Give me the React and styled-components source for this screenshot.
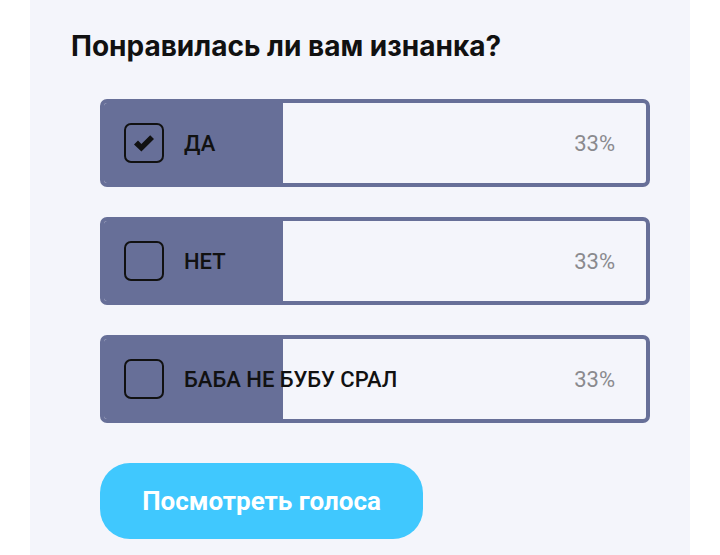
import React, { useState } from "react";
import styled, { createGlobalStyle } from "styled-components";

const GlobalStyle = createGlobalStyle`
  body {
    margin: 0;
    background: #ffffff;
    font-family: Roboto, "Liberation Sans", sans-serif;
  }
`;

const Panel = styled.div`
  margin: 0 30px;
  min-height: 555px;
  background: #f4f5fb;
  padding: 29px 0 0 41px;
  box-sizing: border-box;
`;

const Title = styled.h2`
  margin: 0;
  font-family: Inter, Roboto, sans-serif;
  font-size: 28px;
  line-height: 34px;
  font-weight: 700;
  color: #111111;
`;

const OptionList = styled.div`
  display: flex;
  flex-direction: column;
  gap: 30px;
  width: 550px;
  margin: 36px 0 0 29px;
`;

const Option = styled.div`
  position: relative;
  height: 88px;
  box-sizing: border-box;
  border: 4px solid #676f98;
  border-radius: 7px;
  overflow: hidden;
  display: flex;
  align-items: center;
  padding: 0 31px 0 20px;
  cursor: pointer;
`;

const Fill = styled.div`
  position: absolute;
  left: 0;
  top: 0;
  bottom: 0;
  background: #676f98;
`;

const Checkbox = styled.div`
  position: relative;
  width: 40px;
  height: 40px;
  box-sizing: border-box;
  border: 2px solid #111111;
  border-radius: 7px;
  display: flex;
  align-items: center;
  justify-content: center;
  flex-shrink: 0;
`;

const Label = styled.span`
  position: relative;
  margin-left: 20px;
  font-size: 22px;
  font-weight: 500;
  color: #111111;
  text-transform: uppercase;
`;

const Percent = styled.span`
  position: relative;
  margin-left: auto;
  font-size: 22px;
  color: #8a8a8e;
`;

const Button = styled.button`
  margin: 40px 0 0 29px;
  width: 323px;
  height: 76px;
  border: none;
  border-radius: 30px;
  background: #40c8fe;
  color: #ffffff;
  font-family: Roboto, "Liberation Sans", sans-serif;
  font-size: 26px;
  font-weight: 700;
  cursor: pointer;
`;

const CheckIcon = () => (
  <svg width="24" height="24" viewBox="0 0 24 24">
    <path
      d="M2 13.4 L6 9.6 L9.4 13 L18.2 4.2 L22 8 L9.4 20.6 Z"
      fill="#111111"
    />
  </svg>
);

const options = [
  { id: 1, text: "Да", percent: 33 },
  { id: 2, text: "Нет", percent: 33 },
  { id: 3, text: "Баба не бубу срал", percent: 33 },
];

export default function App() {
  const [selected, setSelected] = useState(1);

  return (
    <>
      <GlobalStyle />
      <Panel>
        <Title>Понравилась ли вам изнанка?</Title>
        <OptionList>
          {options.map((opt) => (
            <Option key={opt.id} onClick={() => setSelected(opt.id)}>
              <Fill style={{ width: opt.percent + "%" }} />
              <Checkbox>{selected === opt.id && <CheckIcon />}</Checkbox>
              <Label>{opt.text}</Label>
              <Percent>{opt.percent}%</Percent>
            </Option>
          ))}
        </OptionList>
        <Button>Посмотреть голоса</Button>
      </Panel>
    </>
  );
}
